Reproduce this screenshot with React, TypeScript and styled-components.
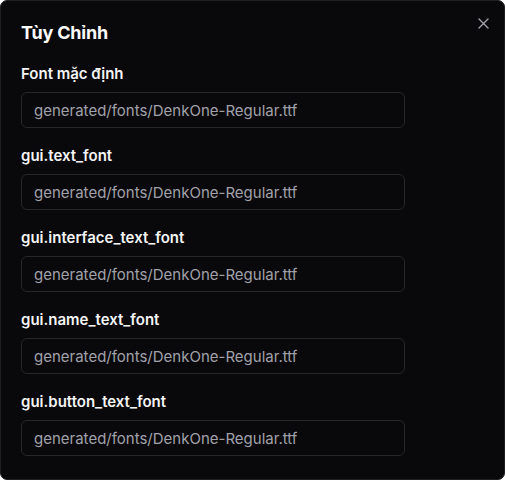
import React from "react";
import styled, { createGlobalStyle } from "styled-components";

const GlobalStyle = createGlobalStyle`
    html, body {
        margin: 0;
        padding: 0;
        background: #ffffff;
    }
    body {
        font-family: Inter, "Noto Sans", "Liberation Sans", sans-serif;
    }
`;

const Dialog = styled.div`
    position: relative;
    box-sizing: border-box;
    width: 505px;
    height: 480px;
    background: #09090b;
    border: 1px solid #1f1f22;
    border-radius: 7px;
    padding: 18px 20px 0 20px;
    color: #fafafa;
    overflow: hidden;
`;

const Title = styled.h2`
    margin: 0;
    font-size: 18px;
    font-weight: 700;
    line-height: 28px;
    letter-spacing: -0.2px;
`;

const Close = styled.button`
    position: absolute;
    top: 14px;
    right: 13px;
    width: 16px;
    height: 16px;
    padding: 0;
    border: none;
    background: transparent;
    color: #a1a1aa;
    display: flex;
    align-items: center;
    justify-content: center;
`;

const Fields = styled.div`
    margin-top: 18px;
    display: flex;
    flex-direction: column;
    gap: 19px;
`;

const Field = styled.div`
    display: flex;
    flex-direction: column;
    gap: 9px;
`;

const Label = styled.label`
    font-size: 15px;
    font-weight: 600;
    line-height: 18px;
    color: #f4f4f5;
`;

const Input = styled.input`
    box-sizing: border-box;
    width: 384px;
    height: 36px;
    padding: 0 12px;
    background: transparent;
    border: 1px solid #27272a;
    border-radius: 6px;
    font-family: inherit;
    font-size: 15px;
    color: #a1a1aa;
    outline: none;
`;

const fields = [
    "Font mặc định",
    "gui.text_font",
    "gui.interface_text_font",
    "gui.name_text_font",
    "gui.button_text_font",
];

const App: React.FC = () => {
    return <>
        <GlobalStyle />
        <Dialog>
            <Title>Tùy Chỉnh</Title>
            <Close aria-label="Close">
                <svg width="11" height="11" viewBox="0 0 11 11" fill="none" stroke="currentColor" strokeWidth="1.4" strokeLinecap="round">
                    <path d="M1 1 L10 10 M10 1 L1 10" />
                </svg>
            </Close>
            <Fields>
                {fields.map((name) => <Field key={name}>
                    <Label>{name}</Label>
                    <Input readOnly value="generated/fonts/DenkOne-Regular.ttf" />
                </Field>)}
            </Fields>
        </Dialog>
    </>;
}
export default App;
